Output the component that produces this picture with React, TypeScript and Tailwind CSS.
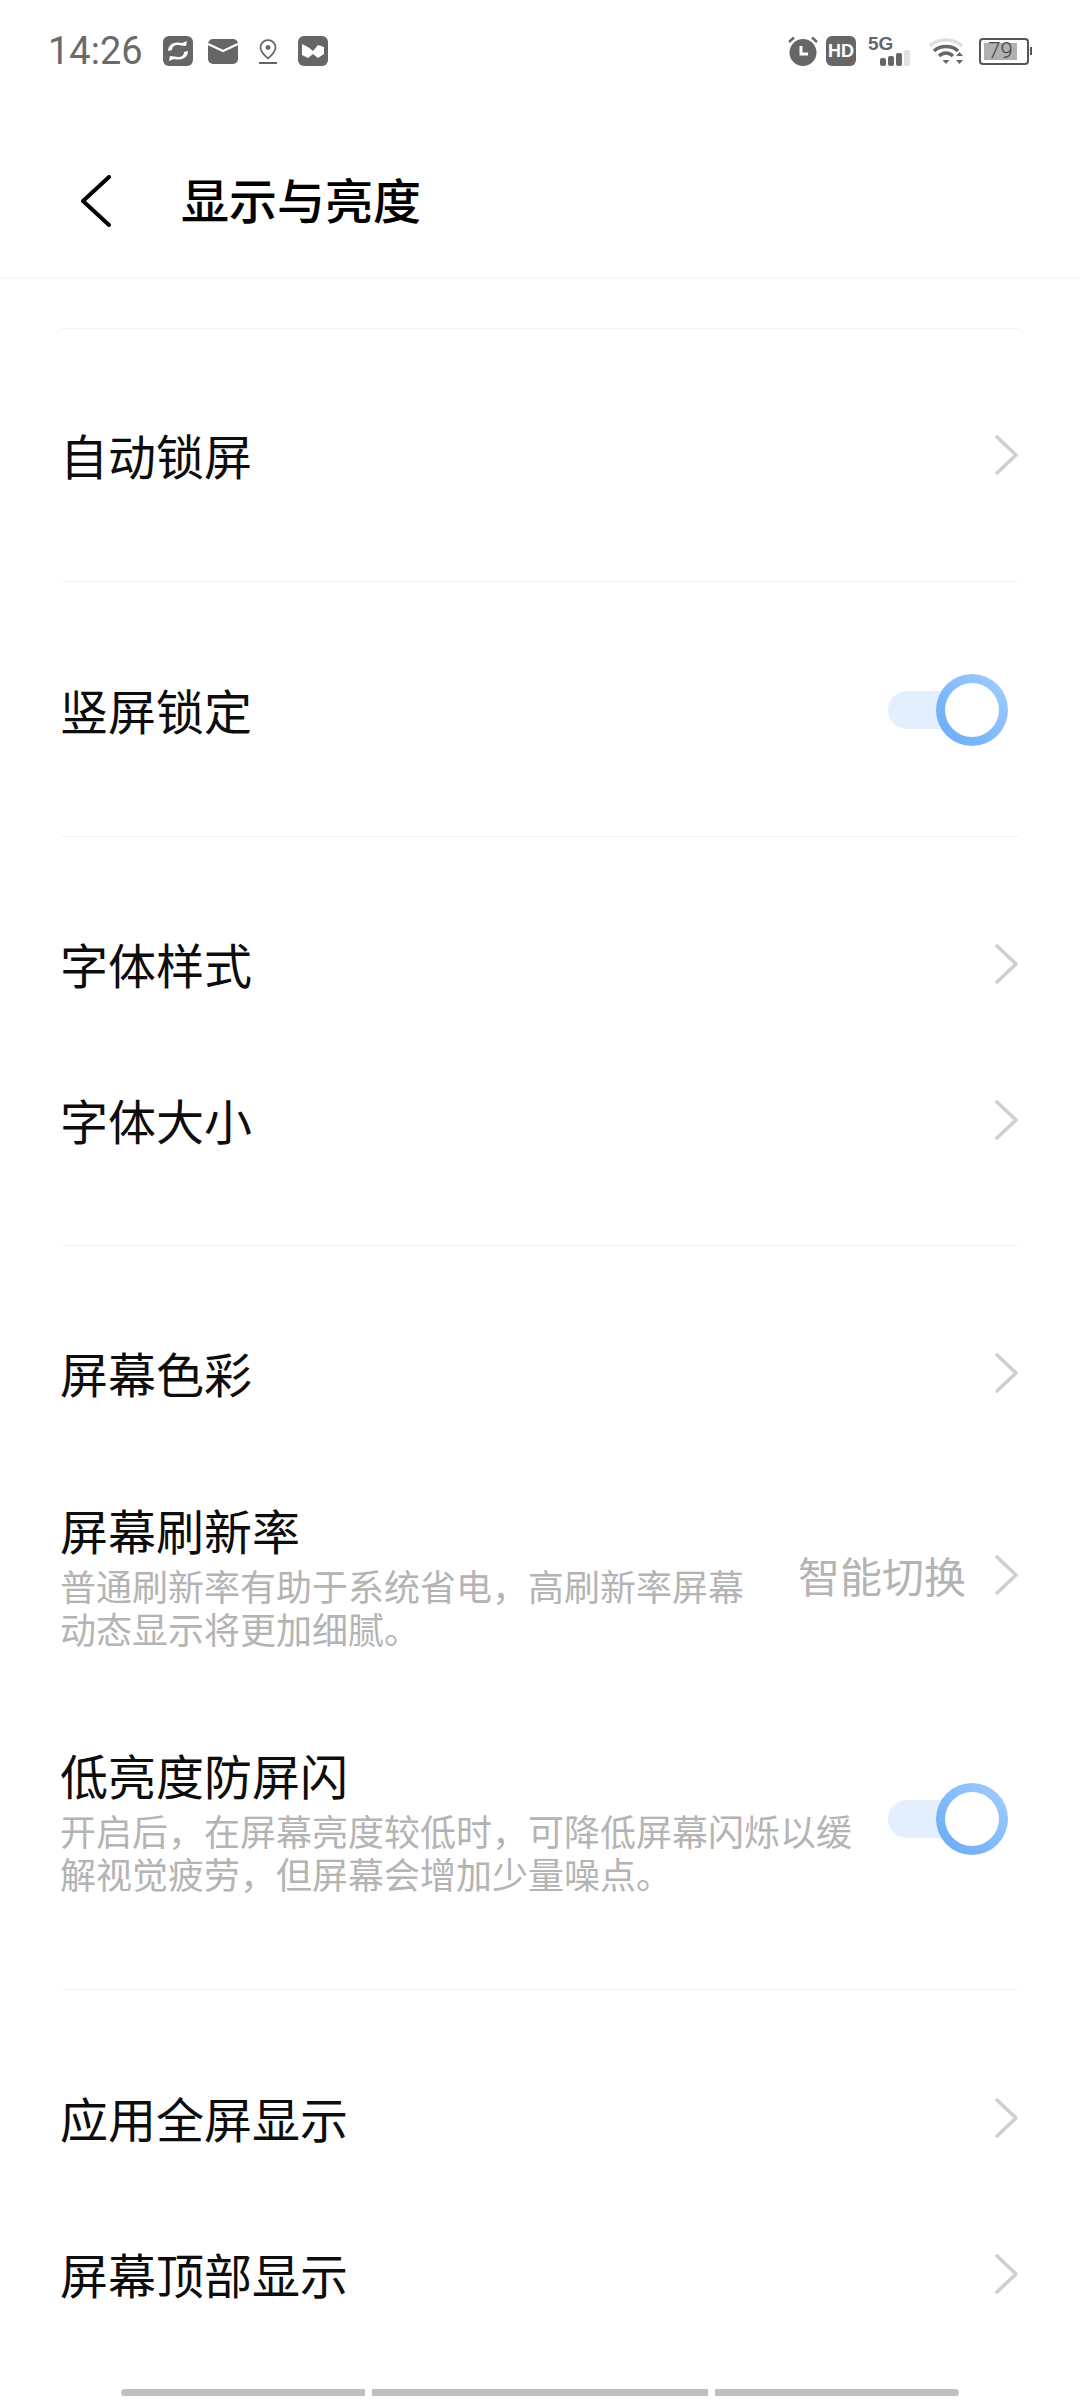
const font = "font-['Noto_Sans_CJK_SC','Noto_Sans',sans-serif]";

function Chevron() {
  return (
    <svg width="24" height="40" viewBox="0 0 24 40" fill="none" className="shrink-0">
      <path d="M2 2 L21 20 L2 38" stroke="#cfcfcf" strokeWidth="3.6" strokeLinecap="round" strokeLinejoin="round" />
    </svg>
  );
}

function Toggle() {
  return (
    <div className="relative w-[120px] h-[72px] shrink-0 flex items-center">
      <div className="w-[80px] h-[38px] rounded-full bg-[#e3effd]" />
      <div className="absolute right-0 top-0 w-[72px] h-[72px] rounded-full bg-gradient-to-tr from-[#66a8f6] to-[#a2cfff] flex items-center justify-center">
        <div className="w-[54px] h-[54px] rounded-full bg-white" />
      </div>
    </div>
  );
}

function Row({ label, toggle }: { label: string; toggle?: boolean }) {
  return (
    <div className={`h-[156px] flex items-center justify-between pl-[60px] ${toggle ? "pr-[72px]" : "pr-[61px]"}`}>
      <span className="text-[48px] leading-[56px] mt-[-2px] text-[#0d0d0d]">{label}</span>
      {toggle ? <Toggle /> : <Chevron />}
    </div>
  );
}

function Divider() {
  return <div className="mx-[61px] h-px bg-[#f3f3f3]" />;
}

function StatusBar() {
  return (
    <div className="h-[102px] flex items-center justify-between pl-[48px] pr-[48px]">
      <div className="flex items-center">
        <span className="font-['Roboto',sans-serif] text-[38px] leading-none text-[#6a6a6a] w-[115px]">14:26</span>
        <svg width="30" height="30" viewBox="0 0 30 30">
          <rect width="30" height="30" rx="6" fill="#666" />
          <path d="M5 15 C5 8 12 5 19 7 L24 5 L23 10 L15 9 C11 9 9 11 9 14Z" fill="#fff" />
          <path d="M25 15 C25 22 18 25 11 23 L6 25 L7 20 L15 21 C19 21 21 19 21 16Z" fill="#fff" />
        </svg>
        <svg width="30" height="25" viewBox="0 0 30 25" className="ml-[15px]">
          <rect width="30" height="25" rx="5" fill="#666" />
          <path d="M0 5 L15 12 L30 5" fill="none" stroke="#fff" strokeWidth="2.4" />
        </svg>
        <svg width="18" height="25" viewBox="0 0 18 25" className="ml-[21px]">
          <path d="M9 1.2 C4.5 1.2 1.5 4.4 1.5 8.4 C1.5 12.6 5.5 16.4 9 19.4 C12.5 16.4 16.5 12.6 16.5 8.4 C16.5 4.4 13.5 1.2 9 1.2Z" fill="none" stroke="#666" strokeWidth="1.8" />
          <circle cx="9" cy="8.5" r="2.4" fill="#666" />
          <rect y="23" width="18" height="2" fill="#666" />
        </svg>
        <svg width="30" height="30" viewBox="0 0 30 30" className="ml-[21px]">
          <rect width="30" height="30" rx="6" fill="#666" />
          <path d="M4 8 L10 11 L15 15 L20 9 L26 11 L26 18 L20 22 L15 18 L10 22 L4 19Z" fill="#fff" />
        </svg>
      </div>
      <div className="flex items-center">
        <svg width="30" height="30" viewBox="0 0 30 30">
          <circle cx="15" cy="16.5" r="13.5" fill="#666" />
          <path d="M1 6 L6 1.5 M29 6 L24 1.5" stroke="#666" strokeWidth="2.4" />
          <path d="M13 10 V18 H20" fill="none" stroke="#fff" strokeWidth="3" />
        </svg>
        <div className="ml-[8px] w-[30px] h-[30px] rounded-[6px] bg-[#666] flex items-center justify-center font-['Liberation_Sans',sans-serif] font-bold text-[18px] leading-none text-white">HD</div>
        <div className="relative ml-[12px] w-[48px] h-[30px]">
          <span className="absolute left-0 top-[-1px] font-['Liberation_Sans',sans-serif] font-bold text-[19px] leading-[17px] text-[#666]">5G</span>
          <div className="absolute left-[12px] bottom-0 flex items-end gap-[2px]">
            <div className="w-[6px] h-[8px] rounded-[2px] bg-[#666]" />
            <div className="w-[6px] h-[10px] rounded-[2px] bg-[#666]" />
            <div className="w-[6px] h-[13px] rounded-[2px] bg-[#666]" />
            <div className="w-[6px] h-[16px] rounded-[1px] bg-[#e2e2e2]" />
          </div>
        </div>
        <svg width="36" height="28" viewBox="0 0 36 28" className="ml-[13px]">
          <path d="M1 9 C9 1 25 1 33 9" fill="none" stroke="#dedede" strokeWidth="3.4" />
          <path d="M5 14 C11 8 23 8 29 14" fill="none" stroke="#666" strokeWidth="3.4" />
          <path d="M10 19 C14 15 20 15 24 19" fill="none" stroke="#666" strokeWidth="3.4" />
          <path d="M13.5 23 H20.5 L17 27Z" fill="#666" />
          <path d="M27 19 L30.5 15 L34 19Z" fill="#666" />
          <path d="M27 23 H34 L30.5 27Z" fill="#666" />
        </svg>
        <div className="ml-[14px] flex items-center">
          <div className="w-[50px] h-[27px] rounded-[4px] border-2 border-[#555] p-[3px] flex">
            <div className="w-[33px] h-full bg-[#b0b0b0] flex items-center justify-center font-['Roboto',sans-serif] font-light text-[22px] leading-none text-[#444]">79</div>
          </div>
          <div className="ml-[1px] w-[2px] h-[8px] bg-[#555]" />
        </div>
      </div>
    </div>
  );
}

export default function App() {
  return (
    <div className={`w-[1080px] h-[2400px] bg-white overflow-hidden ${font}`}>
      <StatusBar />
      <div className="h-[176px] pt-[22px] flex items-center border-b border-[#f6f6f6]">
        <svg width="32" height="52" viewBox="0 0 32 52" fill="none" className="ml-[80px] shrink-0">
          <path d="M29 2 L3 26 L29 50" stroke="#000" strokeWidth="4" strokeLinecap="round" strokeLinejoin="round" />
        </svg>
        <span className="ml-[69px] mt-[-5px] text-[48px] leading-[56px] font-medium text-black">显示与亮度</span>
      </div>

      <div className="mt-[50px]"><Divider /></div>
      <div className="pt-[48px] pb-[48px]">
        <Row label="自动锁屏" />
      </div>
      <Divider />
      <div className="pt-[50px] pb-[48px]">
        <Row label="竖屏锁定" toggle />
      </div>
      <Divider />
      <div className="pt-[49px] pb-[47px]">
        <Row label="字体样式" />
        <Row label="字体大小" />
      </div>
      <Divider />
      <div className="pt-[49px] pb-[48px]">
        <Row label="屏幕色彩" />
        <div className="pt-[52px] pb-[45px] pl-[60px] pr-[61px] flex items-center justify-between">
          <div className="w-[700px] pb-[1px]">
            <div className="text-[48px] leading-[56px] mt-[-2px] text-[#0d0d0d]">屏幕刷新率</div>
            <div className="mt-[7px] text-[36px] leading-[43px] text-[#b4b4b4]">普通刷新率有助于系统省电，高刷新率屏幕动态显示将更加细腻。</div>
          </div>
          <div className="flex items-center gap-[29px] mt-[-4px]">
            <span className="text-[42px] leading-[56px] text-[#b4b4b4]">智能切换</span>
            <Chevron />
          </div>
        </div>
        <div className="pt-[52px] pb-[45px] pl-[60px] pr-[72px] flex items-center justify-between">
          <div className="w-[800px] pb-[1px]">
            <div className="text-[48px] leading-[56px] mt-[-2px] text-[#0d0d0d]">低亮度防屏闪</div>
            <div className="mt-[7px] text-[36px] leading-[43px] text-[#b4b4b4]">开启后，在屏幕亮度较低时，可降低屏幕闪烁以缓解视觉疲劳，但屏幕会增加少量噪点。</div>
          </div>
          <div className="mt-[-6px]"><Toggle /></div>
        </div>
      </div>
      <Divider />
      <div className="pt-[50px]">
        <Row label="应用全屏显示" />
        <Row label="屏幕顶部显示" />
      </div>

      <div className="mt-[37px] px-[121px] flex gap-[7px]">
        <div className="w-[246px] h-[7px] rounded-l-full bg-[#c0c0c0]" />
        <div className="w-[338px] h-[7px] bg-[#c0c0c0]" />
        <div className="w-[246px] h-[7px] rounded-r-full bg-[#c0c0c0]" />
      </div>
    </div>
  );
}
